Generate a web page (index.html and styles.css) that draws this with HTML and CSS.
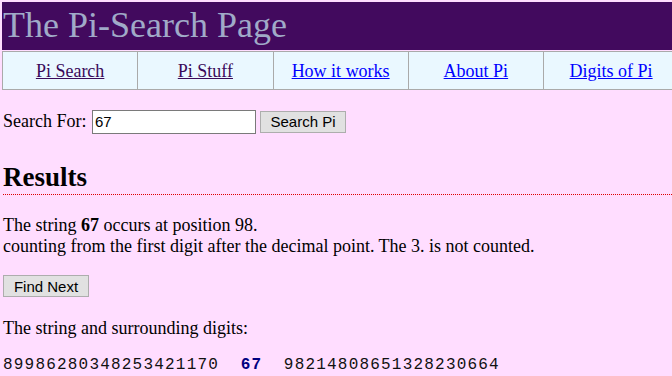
FILE: index.html
```html
<!DOCTYPE html>
<html>
<head>
<meta charset="utf-8">
<title>The Pi-Search Page</title>
<link rel="stylesheet" href="styles.css">
</head>
<body>
<div class="banner"><h1 class="title">The Pi-Search Page</h1></div>
<div class="navwrap">
  <div class="nav">
    <div class="cell"><a class="visited" href="#">Pi Search</a></div>
    <div class="cell"><a class="visited" href="#">Pi Stuff</a></div>
    <div class="cell"><a href="#">How it works</a></div>
    <div class="cell"><a href="#">About Pi</a></div>
    <div class="cell"><a href="#">Digits of Pi</a></div>
  </div>
</div>
<form class="search">
  <label>Search For: <input class="field" type="text" value="67"></label>
  <button class="btn" type="button">Search Pi</button>
</form>
<h2 class="results">Results</h2>
<p class="para first">The string <b>67</b> occurs at position 98.<br>counting from the first digit after the decimal point. The 3. is not counted.</p>
<p class="para findp"><button class="btn next" type="button">Find Next</button></p>
<p class="para around">The string and surrounding digits:</p>
<p class="digits">89986280348253421170  <b class="hit">67</b>  98214808651328230664</p>
</body>
</html>
```
FILE: styles.css
```css
html, body {
  overflow: hidden;
}
body {
  margin: 2px 0 0 2px;
  background: #ffddff;
  font-family: "Liberation Serif", "Times New Roman", serif;
  font-size: 18px;
  color: #000;
}
.banner {
  background: #420a5e;
  height: 48px;
  padding-top: 3px;
  box-sizing: border-box;
}
.title {
  margin: 0;
  font-weight: normal;
  font-size: 36px;
  line-height: 41px;
  color: #a0aac8;
  padding-left: 1px;
}
.navwrap {
  overflow: hidden;
  margin-top: 1px;
}
.nav {
  display: grid;
  grid-template-columns: repeat(5, 135.25px);
  width: 680px;
  border-top: 1px solid #aaaaaa;
  border-bottom: 1px solid #aaaaaa;
}
.cell {
  background: #eaf8ff;
  border-left: 1px solid #aaaaaa;
  text-align: center;
  height: 37px;
  box-sizing: border-box;
  padding-top: 9px;
  line-height: 21px;
}
.cell a {
  color: #0000ff;
}
.cell a.visited {
  color: #3a0a5a;
}
.search {
  margin: 18px 0 0 1px;
  line-height: 26px;
}
.field {
  width: 164px;
  height: 24px;
  box-sizing: border-box;
  border: 1px solid #7a7a7a;
  background: #fff;
  font-family: "Liberation Sans", Arial, sans-serif;
  font-size: 15px;
  padding: 1px 2px;
  margin: 0 0 0 1px;
}
.btn {
  font-family: "Liberation Sans", Arial, sans-serif;
  font-size: 15px;
  background: #e1e1e1;
  border: 1px solid #adadad;
  height: 22px;
  padding: 0 9px;
  margin: 0;
  color: #000;
  white-space: nowrap;
}
.btn.next {
  margin: 0;
  width: 86px;
  padding: 0;
}
.results {
  font-size: 27px;
  margin: 28px 0 0 1px;
  line-height: 31px;
  padding-bottom: 1px;
  border-bottom: 1px dotted #dd0000;
}
.para {
  margin: 18px 0 0 1px;
  line-height: 20.7px;
}
.para.first {
  margin-top: 20px;
}
.para.findp {
  margin-top: 19px;
}
.para.around {
  margin-top: 21px;
}
.digits {
  margin: 17px 0 0 1px;
  font-family: "Liberation Mono", "Courier New", monospace;
  font-size: 16px;
  letter-spacing: 1.2px;
  white-space: pre;
  color: #111;
}
.hit {
  color: #000080;
}
```
